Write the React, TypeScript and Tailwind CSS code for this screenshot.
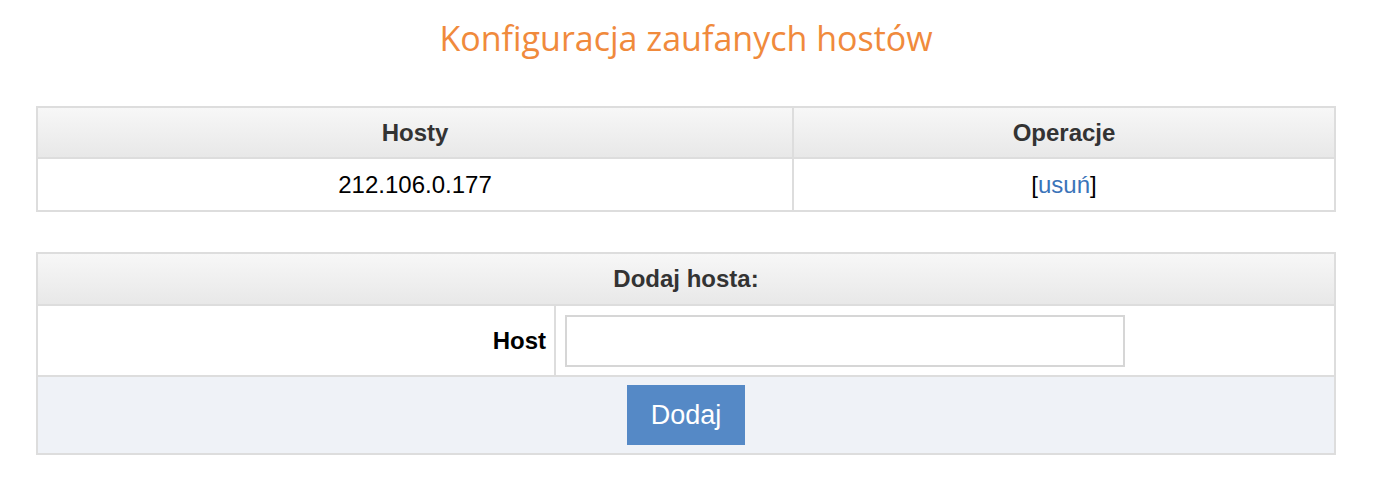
export default function App() {
  const headerBg = 'bg-[linear-gradient(to_bottom,#f7f7f7,#e8e8e8)]';

  return (
    <div className="min-h-[496px] bg-white font-['Liberation_Sans',Arial,sans-serif]">
      <div className="ml-[36px] w-[1300px] pt-[18px]">
        {/* Page title */}
        <h1 className="h-[40px] text-center font-['Open_Sans',sans-serif] text-[34px] leading-[40px] text-[#f08a3c]">
          Konfiguracja zaufanych hostów
        </h1>

        {/* Trusted hosts list */}
        <div className="mt-[48px] border-2 border-[#dddddd]">
          <div className={`flex h-[51px] border-b-2 border-[#dddddd] ${headerBg}`}>
            <div className="flex w-[756px] items-center justify-center border-r-2 border-[#dddddd] text-[24px] font-bold text-[#333333]">
              Hosty
            </div>
            <div className="flex flex-1 items-center justify-center text-[24px] font-bold text-[#333333]">
              Operacje
            </div>
          </div>
          <div className="flex h-[51px]">
            <div className="flex w-[756px] items-center justify-center border-r-2 border-[#dddddd] text-[24px] text-black">
              212.106.0.177
            </div>
            <div className="flex flex-1 items-center justify-center text-[24px] text-black">
              [<a href="#" className="text-[#3b74b9]">usuń</a>]
            </div>
          </div>
        </div>

        {/* Add host form */}
        <div className="mt-[40px] border-2 border-[#dddddd]">
          <div className={`flex h-[52px] items-center justify-center border-b-2 border-[#dddddd] text-[24px] font-bold text-[#333333] ${headerBg}`}>
            Dodaj hosta:
          </div>
          <div className="flex h-[71px] border-b-2 border-[#dddddd]">
            <label className="flex w-[518px] items-center justify-end border-r-2 border-[#dddddd] pr-[8px] text-[24px] font-bold text-black">
              Host
            </label>
            <div className="flex flex-1 items-center pl-[9px]">
              <input
                type="text"
                className="h-[52px] w-[560px] border-2 border-[#d6d6d6] bg-white px-2 text-[24px] outline-none"
              />
            </div>
          </div>
          <div className="flex h-[76px] items-center justify-center bg-[#eff2f7]">
            <button className="h-[60px] w-[118px] bg-[#5589c6] text-[27px] text-white">
              Dodaj
            </button>
          </div>
        </div>
      </div>
    </div>
  );
}
